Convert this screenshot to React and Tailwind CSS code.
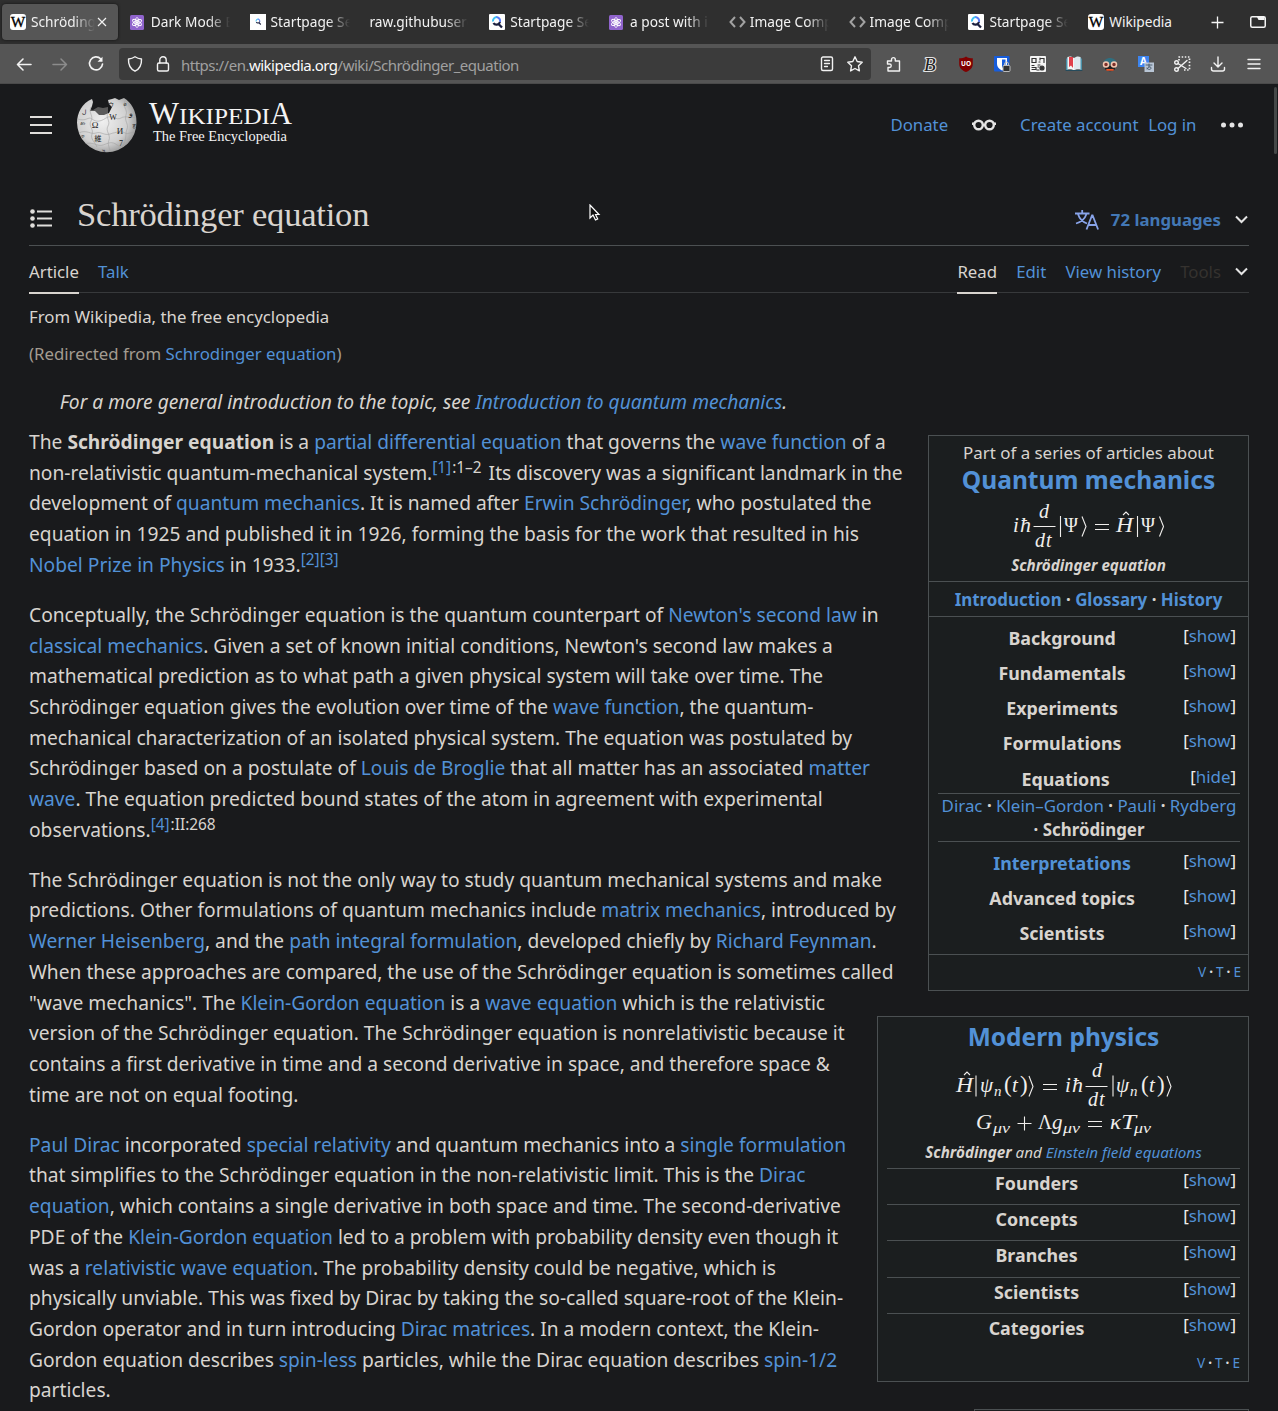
import React from 'react';

const L = ({ children }) => <a className="text-[#5291d6]">{children}</a>;

/* Inline markup: [[link]], **bold**, ^^superscript^^ */
function rich(text) {
  return text.split(/(\[\[.*?\]\]|\*\*.*?\*\*|\^\^.*?\^\^)/).map((s, i) => {
    if (s.startsWith('[[')) return <L key={i}>{s.slice(2, -2)}</L>;
    if (s.startsWith('**')) return <b key={i} className="font-bold">{s.slice(2, -2)}</b>;
    if (s.startsWith('^^')) {
      const [ref, page] = s.slice(2, -2).split('|');
      return (
        <sup key={i} className="top-0 align-[7px] text-[15.4px] leading-none">
          <L>{ref}</L>{page && <span className="mr-[2px] ml-[1px]">{page}</span>}
        </sup>
      );
    }
    return s;
  });
}

const PARAGRAPHS = [
  [
    'The **Schrödinger equation** is a [[partial differential equation]] that governs the [[wave function]] of a',
    'non-relativistic quantum-mechanical system.^^[1]|:1–2^^ Its discovery was a significant landmark in the',
    'development of [[quantum mechanics]]. It is named after [[Erwin Schrödinger]], who postulated the',
    'equation in 1925 and published it in 1926, forming the basis for the work that resulted in his',
    '[[Nobel Prize in Physics]] in 1933.^^[2][3]^^',
  ],
  [
    "Conceptually, the Schrödinger equation is the quantum counterpart of [[Newton's second law]] in",
    "[[classical mechanics]]. Given a set of known initial conditions, Newton's second law makes a",
    'mathematical prediction as to what path a given physical system will take over time. The',
    'Schrödinger equation gives the evolution over time of the [[wave function]], the quantum-',
    'mechanical characterization of an isolated physical system. The equation was postulated by',
    'Schrödinger based on a postulate of [[Louis de Broglie]] that all matter has an associated [[matter]]',
    '[[wave]]. The equation predicted bound states of the atom in agreement with experimental',
    'observations.^^[4]|:II:268^^',
  ],
  [
    'The Schrödinger equation is not the only way to study quantum mechanical systems and make',
    'predictions. Other formulations of quantum mechanics include [[matrix mechanics]], introduced by',
    '[[Werner Heisenberg]], and the [[path integral formulation]], developed chiefly by [[Richard Feynman]].',
    'When these approaches are compared, the use of the Schrödinger equation is sometimes called',
    '"wave mechanics". The [[Klein-Gordon equation]] is a [[wave equation]] which is the relativistic',
    'version of the Schrödinger equation. The Schrödinger equation is nonrelativistic because it',
    'contains a first derivative in time and a second derivative in space, and therefore space &',
    'time are not on equal footing.',
  ],
  [
    '[[Paul Dirac]] incorporated [[special relativity]] and quantum mechanics into a [[single formulation]]',
    'that simplifies to the Schrödinger equation in the non-relativistic limit. This is the [[Dirac]]',
    '[[equation]], which contains a single derivative in both space and time. The second-derivative',
    'PDE of the [[Klein-Gordon equation]] led to a problem with probability density even though it',
    'was a [[relativistic wave equation]]. The probability density could be negative, which is',
    'physically unviable. This was fixed by Dirac by taking the so-called square-root of the Klein-',
    'Gordon operator and in turn introducing [[Dirac matrices]]. In a modern context, the Klein-',
    'Gordon equation describes [[spin-less]] particles, while the Dirac equation describes [[spin-1/2]]',
    'particles.',
  ],
];

/* ---------- favicons ---------- */
const WikiFav = () => (
  <svg width="16" height="16"><rect width="16" height="16" rx="3" fill="#fff" />
    <text x="8" y="12.5" textAnchor="middle" fontSize="14" textLength="14.5" lengthAdjust="spacingAndGlyphs" fontFamily="Liberation Serif" fill="#000" stroke="#000" strokeWidth=".3">W</text>
  </svg>
);
const AtomFav = () => (
  <svg width="14" height="15" fill="none" stroke="#fff" strokeWidth="0.9"><rect width="14" height="15" rx="1.5" fill="#9064cd" stroke="none" />
    <ellipse cx="7" cy="7.5" rx="5" ry="2" transform="rotate(90 7 7.5)" /><ellipse cx="7" cy="7.5" rx="5" ry="2" transform="rotate(30 7 7.5)" />
    <ellipse cx="7" cy="7.5" rx="5" ry="2" transform="rotate(150 7 7.5)" /><circle cx="7" cy="7.5" r="1" fill="#fff" />
  </svg>
);
const StartFav = ({ small }) => (
  <svg width="16" height="16" viewBox="0 0 16 16"><rect width="16" height="16" rx={small ? 0 : 1} fill="#fff" />
    <g transform={small ? 'translate(4 3.5) scale(.52)' : undefined} fill="none">
      <path d="M4 7.5A4 4 0 0 1 8 3" stroke="#3ec3f5" strokeWidth="2" />
      <path d="M7.5 3a4 4 0 0 1 3.5 5" stroke="#5b7cf7" strokeWidth="2" />
      <path d="M4.5 9C6 11.5 10 11 11 8M9.5 10l3.5 3.5" stroke="#1c2140" strokeWidth="2.3" />
    </g>
  </svg>
);
const CodeFav = () => (
  <svg width="17" height="12" fill="none" stroke="#a2a2a2" strokeWidth="2" className="shrink-0"><path d="M6 1 1.5 6 6 11M11 1l4.500 5L11 11" /></svg>
);

const TABS = [
  ['wiki', 'Schröding', true],
  ['atom', 'Dark Mode E'],
  ['start0', 'Startpage Se'],
  [null, 'raw.githubuserc'],
  ['start', 'Startpage Se'],
  ['atom', 'a post with in'],
  ['code', 'Image Comp'],
  ['code', 'Image Comp'],
  ['start', 'Startpage Se'],
  ['wiki', 'Wikipedia'],
];
const FAV = { wiki: <WikiFav />, atom: <AtomFav />, start0: <StartFav small />, start: <StartFav />, code: <CodeFav /> };

function TabStrip() {
  return (
    <div className="flex h-11 items-center bg-[#2f2f2f] text-[13.7px] text-[#f2f2f2]">
      {TABS.map(([icon, title, active], i) => (
        <div key={i} className="flex h-9 w-[119.800px] shrink-0 px-[2px]">
          <div className={active ? 'flex w-full items-center rounded bg-[#565656] pl-2 shadow-[0_0_3px_#111]' : 'flex w-full items-center pl-2'}>
            {icon && <span className="flex w-4 shrink-0">{FAV[icon]}</span>}
            <span className={(icon ? 'ml-[5px] ' : '') + (active ? 'w-[64px] ' : icon ? 'w-[79px] ' : 'w-[99px] ') + 'shrink-0 overflow-hidden whitespace-nowrap ' + (title === 'Wikipedia' ? '' : '[mask-image:linear-gradient(to_right,#000_calc(100%-22px),transparent)]')}>{title}</span>
            {active && <svg width="10" height="10" stroke="#f2f2f2" strokeWidth="1.200" className="ml-[2px]"><path d="M1 1l8 8M9 1L1 9" /></svg>}
          </div>
        </div>
      ))}
      <div className="flex flex-1 items-center justify-between pl-[13px] pr-[12px]">
        <svg width="13" height="13" stroke="#f5f5f5" strokeWidth="1.300"><path d="M6.500.500v12M.500 6.500h12" /></svg>
        <svg width="16" height="12" fill="none" stroke="#f5f5f5" strokeWidth="1.500"><rect x=".75" y=".75" width="14.500" height="10.500" rx="1.500" /><path d="M7 1h7.500v3H8.500L7 1z" fill="#f5f5f5" stroke="none" /></svg>
      </div>
    </div>
  );
}

const Ic = ({ children, w = 16 }) => (
  <svg width={w} height={w} viewBox="0 0 16 16" fill="none" stroke="#f2f2f2" strokeWidth="1.4" strokeLinecap="round" strokeLinejoin="round" className="overflow-visible">{children}</svg>
);

function Extensions() {
  return (
    <div className="flex gap-5 pl-[15px]">
      <Ic><path d="M1.500 6.500V5h4V3.500a1.900 1.900 0 0 1 3.800 0V5H13.500v10H2v-3.500h1.500a1.500 1.500 0 0 0 0-3.500H1.500z" /></Ic>
      <Ic><text x="2" y="15" fontSize="19" fontStyle="italic" fontFamily="Liberation Serif" fill="#222" stroke="#e4e4e4" strokeWidth="2.200" paintOrder="stroke">B</text></Ic>
      <Ic><path d="M8 .5C10 2 12.500 2.300 14.800 2.300V8c0 4-3 6.500-6.800 8C4.200 14.500 1.200 12 1.200 8V2.300C3.500 2.300 6 2 8 .5z" fill="#800000" stroke="none" /><text x="8" y="10" textAnchor="middle" fontSize="6.500" fontWeight="bold" fontFamily="Noto Sans" fill="#fff" stroke="none">UO</text></Ic>
      <Ic><rect width="15.500" height="15.500" rx="1" fill="#175ddc" stroke="none" /><path d="M3 2h10v6c0 3-2 5-5 6.500C5 13 3 11 3 8z" fill="#fff" stroke="none" /><path d="M8 3.500h3.500v5L8 12z" fill="#175ddc" stroke="none" /><rect x="9" y="9.500" width="7" height="6" rx="1" fill="#333" stroke="#bbb" strokeWidth="1" /><path d="M10.500 9V8a2 2 0 0 1 4 0v1" stroke="#bbb" strokeWidth="1" /></Ic>
      <Ic><rect width="16" height="16" rx="1" fill="#f4f4f4" stroke="none" /><g stroke="#333" strokeWidth="1.200" strokeLinejoin="miter"><path d="M2 2.500h4v4H2zM10 2.500h4v4M10 2v2M9 6h1M2 9.500h2M2 11.500h4v2H2M8 9h2M8 11h1M7 14h2" /><circle cx="12" cy="12" r="2" fill="#333" /></g></Ic>
      <Ic><path d="M0 3l2-2v13l-2 1zM16 3l-2-2v13l2 1z" fill="#4a90a8" stroke="none" /><path d="M1.500 1C4 0 6 .5 8 2v12.500C6 13 4 13 1.500 13.500z" fill="#f5f5f5" stroke="none" /><path d="M14.500 1C12 0 10 .5 8 2v12.500c2-1.500 4-1.500 6.500-1z" fill="#dfe9ef" stroke="none" /><path d="M3 1h4v11L5 9.500 3 11z" fill="#e0404b" stroke="none" /><path d="M0 14.500h16" stroke="#254b5c" strokeWidth="1" /></Ic>
      <Ic><path d="M1.500 8c0-8 13-8 13 0z" fill="#2f6f80" stroke="none" /><path d="M3 10h10v3c-2 3-8 3-10 0z" fill="#222" stroke="none" /><circle cx="4" cy="8.500" r="2.500" fill="#7c2f2a" stroke="#f3c7b0" strokeWidth="1.500" /><circle cx="12" cy="8.500" r="2.500" fill="#7c2f2a" stroke="#f3c7b0" strokeWidth="1.500" /><path d="M5 13.800h6" stroke="#f0572b" strokeWidth="1.800" /></Ic>
      <Ic><rect width="11" height="11" fill="#3d85f0" stroke="none" /><text x="5.500" y="9" textAnchor="middle" fontSize="10" fontWeight="bold" fontFamily="Noto Sans" fill="#fff" stroke="none">A</text><rect x="6.500" y="6.500" width="9.500" height="9.500" fill="#b9c6d6" stroke="none" /><path d="M8 9h6M11 8v3M9 13c0-2 4-3 4-1s-3 2-4 0" stroke="#456" strokeWidth=".9" /></Ic>
      <Ic><path d="M5 4.500V1h10.500v13H10" strokeDasharray="1.500 1.600" strokeLinecap="butt" strokeWidth="1.700" /><circle cx="2.500" cy="6.500" r="1.800" /><circle cx="2.500" cy="13.500" r="1.800" /><path d="M4 7.500l8 5M4 12.500l9-8" /></Ic>
      <Ic><path d="M8 1v9.500M4 7l4 4 4-4M1.500 11.500v1.500a2 2 0 0 0 2 2h9a2 2 0 0 0 2-2v-1.500" /></Ic>
      <Ic><path d="M2 3.500h12M2 8h12M2 12.500h12" /></Ic>
    </div>
  );
}

function Toolbar() {
  return (
    <div className="flex h-10 items-center bg-[#555] border-b border-[#4a4a4a]">
      <div className="flex w-[119px] gap-5 pl-4">
        <Ic><path d="M15 8.500H1.500M7 3L1.500 8.500 7 14" strokeWidth="1.600" /></Ic>
        <Ic><path d="M1 8.500h13.500M9 3l5.500 5.500L9 14" stroke="#8c8c8c" strokeWidth="1.500" /></Ic>
        <Ic><path d="M12.800 3A6.500 6.500 0 1 0 14.500 8" strokeWidth="1.700" /><path d="M14.500.800v5h-5z" fill="#f5f5f5" stroke="none" /></Ic>
      </div>
      <div className="flex h-8 w-[752px] items-center rounded bg-[#3b3b3b] pl-2 pr-2">
        <Ic><path d="M8 .8C10 2.200 12 2.800 14.500 3c.3 6-2 10-6.500 12.200C3.500 13 1.200 9 1.500 3 4 2.800 6 2.200 8 .8z" /></Ic>
        <span className="ml-3 flex"><Ic><rect x="2.500" y="7" width="11" height="8" rx="1.500" /><path d="M4.800 7V4a3.200 3.200 0 0 1 6.400 0v3" /></Ic></span>
        <span className="mt-[2px] ml-[10px] text-[15px] leading-5 tracking-[-0.500px] whitespace-nowrap text-[#a0a0a0]">https://en.<span className="text-[#fafafa]">wikipedia.org</span>/wiki/Schrödinger_equation</span>
        <span className="ml-auto flex gap-3">
          <Ic><rect x="2.500" y="1" width="11" height="13.500" rx="1.500" /><path d="M5.500 4.500h5M5.500 7.500h5M5.500 10.500h3" strokeWidth="1.300" /></Ic>
          <Ic><path d="M8 .8l2.200 4.700 5 .7-3.700 3.600.9 5.100L8 12.500l-4.400 2.400.9-5.100L.8 6.200l5-.7z" /></Ic>
        </span>
      </div>
      <Extensions />
    </div>
  );
}

function Globe() {
  const glyphs = [[22, 32, 'Ω', 9], [40, 24, 'W', 8], [47, 38, 'И', 9], [25, 45, '維', 7], [48, 50, '7', 8], [58, 20, 'و', 8], [38, 11, 'ウ', 6], [11, 18, 'ل', 6], [9, 29, 'ள', 6], [10, 42, 'ক', 5], [30, 57, 'უ', 6], [61, 32, 'ह', 6], [52, 10, 'ø', 6]];
  return (
    <svg width="64" height="56" viewBox="0 0 64 56">
      <defs>
        <radialGradient id="globe" cx=".4" cy=".4" r=".65"><stop offset="0" stopColor="#f0f0f0" /><stop offset=".6" stopColor="#d0d0d0" /><stop offset="1" stopColor="#7c7c7c" /></radialGradient>
        <clipPath id="ball"><path d="M15 2C5 6 0 16 0 25.500a29.700 29.700 0 0 0 59.500 0C59.500 14 54 5 47 1l-5 2-4-2-3 1-4 1 1 4 3 3-3 6-5 2-5 0-4-4-5 0 2-5 1-4z" /></clipPath>
      </defs>
      <path d="M11 12l5 1 5-3 5 1 5-1v8H11z" fill="#5a5a5a" />
      <g clipPath="url(#ball)">
        <rect width="64" height="60" fill="url(#globe)" />
        <g fill="none" stroke="#a3a3a3" strokeWidth=".6">
          <path d="M1 22c8 3 10-3 14 0s8 3 14-1 10 3 15 0 10 1 17-1M2 36c7-4 12 2 17 0s8 3 14 1 12-3 15-1 8-2 12-1M8 47c8-3 12 3 18 1s9-4 14 0 8-1 13-2" />
          <path d="M14 10c-3 6 3 9 0 14s3 8 1 13 3 8 5 13M31 16c-3 4 3 8 0 13s3 9 1 14 1 8 1 12M48 4c-3 6 3 8 1 14s3 9 1 14 0 10-4 16" />
        </g>
        <g fill="#222" fontFamily="Liberation Serif, Noto Sans, Noto Sans CJK JP, serif" textAnchor="middle">
          {glyphs.map(([x, y, c, s], i) => <text key={i} x={x - 4} y={y - 1} fontSize={s}>{c}</text>)}
        </g>
      </g>
    </svg>
  );
}

function Wordmark() {
  return (
    <svg width="146" height="48" viewBox="0 0 146 48" fill="#f4f4f4" fontFamily="Liberation Serif">
      <text x="1" y="23" fontSize="31" textLength="30" lengthAdjust="spacingAndGlyphs">W</text>
      <text x="31" y="23" fontSize="23" textLength="91" lengthAdjust="spacingAndGlyphs">IKIPEDI</text>
      <text x="122" y="23" fontSize="31" textLength="22" lengthAdjust="spacingAndGlyphs">A</text>
      <text x="5" y="40" fontSize="15.500" textLength="134" lengthAdjust="spacingAndGlyphs">The Free Encyclopedia</text>
    </svg>
  );
}

const Chevron = () => <svg width="13" height="9" fill="none" stroke="#e4e4e4" strokeWidth="2"><path d="M1 1.500l5.500 5.500L12 1.500" /></svg>;

function SiteHeader() {
  return (
    <header className="flex h-[82px] items-center text-[16.8px] text-[#5291d6]">
      <svg width="24" height="20" stroke="#e0dedb" strokeWidth="2.200"><path d="M1 2h22M1 10h22M1 18h22" /></svg>
      <span className="ml-6 flex"><Globe /></span>
      <span className="ml-[7px] flex"><Wordmark /></span>
      <nav className="ml-auto flex items-center whitespace-nowrap">
        <span>Donate</span>
        <svg width="24" height="12" className="ml-6" fill="none" stroke="#e4e4e4" strokeWidth="2.400"><circle cx="6.500" cy="6" r="4.300" /><circle cx="17.500" cy="6" r="4.300" /><path d="M0 4.800h3M21 4.800h3M10 6h4" /></svg>
        <span className="ml-6">Create account</span>
        <span className="ml-[9.600px]">Log in</span>
        <svg width="24" height="6" className="mr-[5px] ml-[23.500px]" fill="#e4e4e4"><circle cx="3.500" cy="3" r="2.500" /><circle cx="12" cy="3" r="2.500" /><circle cx="20.500" cy="3" r="2.500" /></svg>
      </nav>
    </header>
  );
}

function TitleBar() {
  return (
    <div className="mt-[26px] flex h-[54px] items-center border-b border-[#4c5052]">
      <svg width="24" height="20" className="mt-[1px]" fill="#e0dedb"><circle cx="3.500" cy="2.500" r="2.300" /><circle cx="3.500" cy="9.500" r="2.300" /><circle cx="3.500" cy="16.500" r="2.300" /><path d="M8 1.400h15v2.200H8zM8 8.400h15v2.200H8zM8 15.400h15v2.200H8z" /></svg>
      <h1 className="ml-6 pb-[8px] font-['Liberation_Serif'] text-[34.560px] leading-none tracking-[-0.210px] whitespace-nowrap text-[#d8d4cf]">Schrödinger equation</h1>
      <svg width="24" height="20" className="mt-[3px] ml-auto" viewBox="0 0 24 20" fill="none" stroke="#88a3e8" strokeWidth="1.800"><path d="M0 3.500h14.500M7.200 0v3.500M3 4c1.500 5 5 8 9 9.500M11.500 4C10 8.500 6 12 1 13.500M11.500 19.500l5.500-14h.6l5.500 14M13.500 15h8" /></svg>
      <span className="mt-[3px] ml-3 text-[16.8px] font-bold text-[#4378b5]">72 languages</span>
      <span className="mt-[2px] ml-[13px] flex w-[15px] justify-center"><Chevron /></span>
    </div>
  );
}

function PageTabs() {
  return (
    <div className="flex h-[47px] items-end border-b border-[#37393b] text-[16.8px] whitespace-nowrap text-[#5291d6]">
      <span className="-mb-[2px] h-[35px] border-b-2 border-[#d8d4cf] text-[#d8d4cf]">Article</span>
      <span className="ml-[19.200px] h-[33px]">Talk</span>
      <span className="-mb-[2px] ml-auto h-[35px] border-b-2 border-[#d8d4cf] text-[#d8d4cf]">Read</span>
      <span className="ml-[19.200px] h-[33px]">Edit</span>
      <span className="ml-[19.200px] h-[33px]">View history</span>
      <span className="ml-[19.200px] h-[33px] text-[#35322f]">Tools</span>
      <span className="mb-[16px] ml-[13px] flex w-[15px] justify-center"><Chevron /></span>
    </div>
  );
}

/* ---------- formulas: entries are [x, baseline, text, size, upright, width] ---------- */
function Formula({ w, h, glyphs, lines }) {
  return (
    <svg width={w} height={h} className="block" fill="#f0eeec" stroke="#f0eeec" strokeWidth="0" fontFamily="Liberation Serif, DejaVu Serif, serif">
      {glyphs.map(([x, y, t, s, up, len], i) => (
        <text key={i} x={x} y={y} fontSize={s} fontStyle={up ? 'normal' : 'italic'} textLength={len} lengthAdjust={len ? 'spacingAndGlyphs' : undefined}>{t}</text>
      ))}
      <path d={lines} fill="none" strokeWidth="1.100" />
    </svg>
  );
}
const SchrodingerShort = () => (
  <Formula w={154} h={50}
    glyphs={[[1, 32, 'i', 21], [8, 32, 'ħ', 22, 0, 11], [27, 18, 'd', 20], [23, 47, 'd', 20], [34, 47, 't', 20], [52, 32, 'Ψ', 21, 1, 14], [104, 32, 'H', 21, 0, 17], [129, 32, 'Ψ', 21, 1, 14]]}
    lines="M21.500 26.500h22M48.500 16v21M70 16.500l4 10-4 10M83 24.500h14M83 29.500h14M111 15l3-3 3 3M125.500 16v21M147.500 16.500l4 10-4 10" />
);
const SchrodingerLong = () => (
  <Formula w={220} h={48}
    glyphs={[[2, 30, 'H', 21, 0, 17], [26, 30, 'ψ', 21], [40, 34, 'n', 15], [50, 30, '(', 23, 1], [58, 30, 't', 21], [66, 30, ')', 23, 1], [111, 30, 'i', 21], [118, 30, 'ħ', 22, 0, 11], [138, 15, 'd', 20], [134, 44, 'd', 20], [145, 44, 't', 20], [162, 30, 'ψ', 21], [176, 34, 'n', 15], [187, 30, '(', 23, 1], [195, 30, 't', 21], [203, 30, ')', 23, 1]]}
    lines="M10 13l3-3 3 3M22 13.500v21M75 14l4 10.500-4 10M89 22.500h14M89 27.500h14M131.500 24.500h22M159 13.500v21M213 14l4 10.500-4 10" />
);
const EinsteinField = () => (
  <Formula w={180} h={26}
    glyphs={[[2, 17, 'G', 21, 0, 16], [19, 21, 'μν', 15, 0, 17], [64, 17, 'Λ', 21, 1, 14], [78, 17, 'g', 21], [89, 21, 'μν', 15, 0, 17], [136, 17, 'κ', 21, 0, 11], [147, 17, 'T', 21, 0, 15], [160, 21, 'μν', 15, 0, 17]]}
    lines="M43.500 11.500h14M50.500 4.500v14M114 9.500h14M114 14.500h14" />
);

const Toggle = ({ label = 'show' }) => (
  <span className="mr-1 text-[16.9px] leading-[22px] text-[#f0eeec]">[<L>{label}</L>]</span>
);
const Vte = () => <div className="text-right text-[13.600px] leading-5 text-white"><L>V</L><b className="mx-[3px] text-[#ddd]">·</b><L>T</L><b className="mx-[3px] text-[#ddd]">·</b><L>E</L></div>;

function Head({ label, hide, link, cls }) {
  return (
    <div className={'flex items-start ' + cls}>
      <b className="mt-[2px] flex-1 pl-[3px] text-center text-[17.850px] leading-[22px] text-[#d8d4cf]">{link ? <L>{label}</L> : label}</b>
      <Toggle label={hide ? 'hide' : 'show'} />
    </div>
  );
}

function QuantumBox() {
  const row = 'h-[35px]';
  return (
    <aside className="mt-[8px] flex h-[556px] w-[321px] flex-col border border-[#4b5052] bg-[#1b1e1f] text-[#d8d4cf]">
      <div className="flex h-[145px] flex-col items-center pt-[5px] whitespace-nowrap">
        <div className="text-[16.9px] leading-6">Part of a series of articles about</div>
        <div className="text-[24.580px] leading-[30px] font-bold"><L>Quantum mechanics</L></div>
        <div className="mt-[5px] flex h-[51px]"><SchrodingerShort /></div>
        <div className="mt-[2px] text-[15.200px] leading-6 font-bold italic">Schrödinger equation</div>
      </div>
      <div className="h-[36px] border-y border-[#4b5052] text-center text-[16.9px] leading-[35px] font-bold whitespace-nowrap"><L>Introduction</L> · <L>Glossary</L> · <L>History</L></div>
      <div className="pt-[8px] pr-[8px] pl-[9px]">
        <Head cls={row} label="Background" />
        <Head cls={row} label="Fundamentals" />
        <Head cls={row} label="Experiments" />
        <Head cls={row} label="Formulations" />
        <Head cls="h-[28px] pt-[1px]" label="Equations" hide />
        <div className="h-[49px] border-y border-[#4b5052] text-center text-[16.9px] leading-[24px] whitespace-nowrap">
          <L>Dirac</L> <b>·</b> <L>Klein–Gordon</L> <b>·</b> <L>Pauli</L> <b>·</b> <L>Rydberg</L><br /><b>· Schrödinger</b>
        </div>
        <div className="h-2" />
        <Head cls={row} label="Interpretations" link />
        <Head cls={row} label="Advanced topics" />
        <Head cls="h-[34px]" label="Scientists" />
      </div>
      <div className="border-t border-[#4b5052] pt-[7px] pr-[7px]"><Vte /></div>
    </aside>
  );
}

function ModernBox() {
  return (
    <aside className="mt-[25px] flex h-[366px] w-[372px] flex-col border border-[#4b5052] bg-[#1b1e1f] pr-[8px] pl-[9px] text-[#d8d4cf]">
      <div className="flex h-[151px] flex-col items-center pt-[5px] whitespace-nowrap">
        <div className="text-[24.500px] leading-[30px] font-bold"><L>Modern physics</L></div>
        <div className="mt-[10px] flex h-[48px]"><SchrodingerLong /></div>
        <div className="mt-[2px] flex h-[26px]"><EinsteinField /></div>
        <div className="mt-[2px] text-[15.200px] leading-6 italic"><b>Schrödinger</b> and <L>Einstein field equations</L></div>
      </div>
      {['Founders', 'Concepts', 'Branches', 'Scientists', 'Categories'].map((t) => (
        <Head key={t} cls="h-[36.200px] border-t border-[#4b5052] [&>b]:mt-[3px]" label={t} />
      ))}
      <div className="mt-[4px]"><Vte /></div>
    </aside>
  );
}

export default function App() {
  return (
    <div className="relative h-[1411px] w-[1278px] overflow-hidden bg-[#191a1c] font-['Noto_Sans',sans-serif]">
      <TabStrip />
      <Toolbar />
      <div className="px-[29px]">
        <SiteHeader />
        <TitleBar />
        <PageTabs />
        <div className="h-[134px] whitespace-nowrap text-[#d8d4cf]">
          <div className="pt-[11px] text-[16.8px] leading-[25px]">From Wikipedia, the free encyclopedia</div>
          <div className="mt-[12px] text-[16.8px] leading-[25px] text-[#a39c91]">(Redirected from <L>Schrodinger equation</L>)</div>
          <div className="mt-[21px] pl-[30.700px] text-[19.215px] leading-[30.720px] italic">For a more general introduction to the topic, see <L>Introduction to quantum mechanics</L>.</div>
        </div>
        <div className="flex">
          <main className="w-[848px] shrink-0 text-[19.215px] leading-[30.720px] whitespace-nowrap text-[#d8d4cf]">
            {PARAGRAPHS.map((p, i) => (
              <p key={i} className="mb-[19.200px]">
                {p.map((line) => <span key={line} className="block h-[30.720px]">{rich(line)}</span>)}
              </p>
            ))}
          </main>
          <div className="flex w-[372px] flex-col items-end">
            <QuantumBox />
            <ModernBox />
            <aside className="mt-[27px] h-10 w-[275px] border border-[#4b5052] bg-[#1b1e1f]" />
          </div>
        </div>
      </div>
      <div className="absolute top-[87px] right-[1px] h-[67px] w-[3px] rounded bg-[#454848]" />
      <svg className="absolute top-[204px] left-[589px]" width="12" height="18"><path d="M1 1v13l3-3 2.500 5 2.200-1L6.500 10.500H10z" fill="#111" stroke="#fff" strokeWidth="1.200" /></svg>
    </div>
  );
}
